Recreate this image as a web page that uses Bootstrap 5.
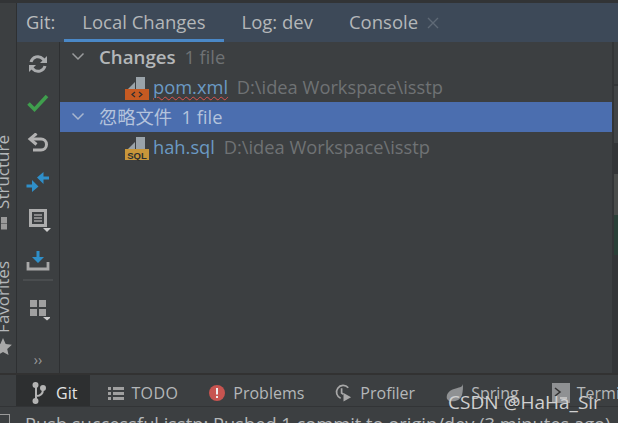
<!DOCTYPE html>
<html lang="en"><head><meta charset="utf-8"><title>Git</title>
<link href="https://cdn.jsdelivr.net/npm/bootstrap@5.3.0/dist/css/bootstrap.min.css" rel="stylesheet">
<style>
html,body{height:423px;overflow:hidden;background:#3c3f41}
body{font-family:"Open Sans","Noto Sans CJK SC",sans-serif;font-size:18.3px;color:#b4b7b9;position:relative;width:618px}
.ide-top{height:3px;background:#323436;flex:none}
.ide-mid{height:372px;flex:none;border-bottom:2px solid #323232}
.strip{width:17px;flex:none;border-right:1px solid #2e3032;position:relative;overflow:hidden}
.vlabel{position:absolute;left:-6px;writing-mode:vertical-rl;transform:rotate(180deg);white-space:nowrap;font-size:17px;line-height:18px;color:#b4b7b9}
.ide-tabs{height:39px;background:#3d4958;flex:none;padding-left:9px;line-height:38px}
.tab-x{padding:0 18px;height:39px;font-size:18.5px}
.tab-on{border-bottom:3px solid #4a88c7}
.tools{width:43px;flex:none;border-right:1px solid #2e3032;padding-top:6px}
.tool{height:39.3px}
.tool-sep{width:30px;height:2px;background:#4a4d4f;margin:-3px 0 12px}
.tree{flex:1;min-width:0}
.rail{width:6px;flex:none;border-left:2px solid #333537;background:#333537}
.rs1{height:42px;background:#3c3f41}
.rs2{height:2px}
.rs3{height:57px;background:#414446}
.rs4{height:31px}
.rs5{height:41px;background:#4a4c4b}
.rs6{height:40px;background:#2a4038}
.t-row{height:30px;line-height:29px;white-space:nowrap}
.t-sel{background:#4b6eaf;color:#b4c3dc}
.t-head{padding-left:39px;position:relative}
.t-file{padding-left:93px;position:relative}
.chev{position:absolute;left:11px;top:10px}
.fico{position:absolute;left:65px;top:5px}
.fname{color:#6b9ac4}
.pom{text-decoration:underline wavy #d9534f 1px;text-underline-offset:2px}
.gray{color:#6f7274}
.changes-h{font-size:18.7px}
.ide-bar{height:32px;flex:none;font-size:16px;line-height:24px;border-bottom:1px solid #323436;padding-left:16px;overflow:hidden}
.b-item{display:flex;align-items:center;gap:7px;padding:5px 15px 0;height:31px;white-space:nowrap}
.b-on{background:#2d2f30;color:#e4e4e4;padding:5px 13px 0 16px;gap:10px}
.b-gap{margin-left:3px}
.todo-t{letter-spacing:.4px}
.ide-status{font-size:18.3px;line-height:20px;white-space:nowrap;padding:7px 0 0 25px;color:#b4b7b9;position:relative}
.chk{position:absolute;left:-1px;top:7px;width:11px;height:14px;border:1px solid #9a9a9a}
.wmark{position:absolute;left:448px;top:389px;font-size:19px;line-height:26px;color:#d0d0d0;white-space:nowrap}
.more{font-size:14px;line-height:16px;margin-bottom:5px;color:#9a9a9a}
</style></head><body>
<div class="d-flex flex-column" style="height:423px">
<div class="ide-top"></div>
<div class="ide-mid d-flex">
<div class="strip">
<div class="vlabel" style="top:132px">Structure</div>
<svg class="position-absolute" style="left:0;top:214px" width="9" height="14"><rect x="1" y="0" width="6" height="6" fill="#9a9a9a"/><rect x="1" y="6.500" width="6" height="6" fill="#9a9a9a"/></svg>
<div class="vlabel" style="top:258px">Favorites</div>
<svg class="position-absolute" style="left:-7px;top:334px" width="20" height="20" viewBox="0 0 18 18"><path d="M9 1l2.400 5.300 5.600.6-4.200 3.800 1.200 5.600L9 13.500l-5 2.800 1.200-5.600L1 6.900l5.600-.6z" fill="#a8a8a8"/></svg>
</div>
<div class="flex-grow-1 d-flex flex-column" style="min-width:0">
<div class="ide-tabs d-flex">
<span style="margin-right:9px;color:#b9bcbe">Git:</span>
<span class="tab-x tab-on">Local Changes</span>
<span class="tab-x">Log: dev</span>
<span class="tab-x pe-2">Console</span>
<svg style="margin-top:13px" width="14" height="14"><path d="M2 2l10 10M12 2L2 12" stroke="#5f6a76" stroke-width="1.400"/></svg>
</div>
<div class="d-flex flex-grow-1">
<div class="tools d-flex flex-column align-items-center">
<div class="tool"><svg width="20" height="20" viewBox="0 0 20 20" fill="none" stroke="#a9abad" stroke-width="3"><path d="M3 8a7 7 0 0 1 12-3l1.500 1.500M17 12a7 7 0 0 1-12 3l-1.500-1.500"/><path d="M19 2V9h-7z" fill="#a9abad" stroke="none"/><path d="M1 18V11h7z" fill="#a9abad" stroke="none"/></svg></div>
<div class="tool"><svg width="22" height="20" viewBox="0 0 22 20" fill="none"><path d="M1.500 10.500l6 6L20 3" stroke="#3f9e4d" stroke-width="3.600"/></svg></div>
<div class="tool"><svg width="22" height="20" viewBox="0 0 22 20" fill="none" stroke="#b2b2b2" stroke-width="3"><path d="M4 6h10a5.500 5.500 0 0 1 0 11H6"/><path d="M9.500 0.500L3 6l6.500 5.500"/></svg></div>
<div class="tool"><svg width="24" height="22" viewBox="0 0 24 22" fill="#2f8fc9"><path d="M11 6.500L17.500 1v4.500H23v3h-5.500V13z"/><path d="M12.500 15.500L6 21v-4.500H.5v-3H6V9z"/></svg></div>
<div class="tool"><svg width="28" height="24" viewBox="0 0 28 24" fill="none"><rect x="6.500" y="1.500" width="15" height="15" stroke="#adadad" stroke-width="3"/><path d="M10 6h8M10 9h8M10 12h8" stroke="#a0a0a0" stroke-width="1.300"/><path d="M19 19h8l-4 4z" fill="#ccc"/></svg></div>
<div class="tool" style="height:38px"><svg width="24" height="22" viewBox="0 0 24 22"><path d="M2 12v7h20V12" fill="none" stroke="#a8a8a8" stroke-width="2.800"/><path d="M10.500 1h3v6H18l-6 6-6-6h4.500z" fill="#2f8fc9"/></svg></div>
<div class="tool-sep"></div>
<div class="tool"><svg width="24" height="24" viewBox="0 0 24 24" fill="#a0a0a0"><rect x="4" y="2" width="7" height="7"/><rect x="13" y="2" width="7" height="7"/><rect x="4" y="11" width="7" height="7"/><rect x="13" y="11" width="7" height="7"/><path d="M17 19h8l-4 3.500z" fill="#ccc"/></svg></div>
<div class="mt-auto more">››</div>
</div>
<div class="tree">
<div class="t-row t-head"><svg class="chev" width="14" height="9"><path d="M1.500 1.500L7 7l5.500-5.500" fill="none" stroke="#9a9c9e" stroke-width="1.500"/></svg><b class="fw-semibold changes-h">Changes</b> <span class="gray ms-1">1 file</span></div>
<div class="t-row t-file"><svg class="fico" width="24" height="24" viewBox="0 0 24 24"><path d="M11 0h9v12H11z" fill="#9aa3a9"/><path d="M3 12l7-7v7z" fill="#9aa3a9"/><rect x="0" y="12" width="24" height="11" fill="#c55a22"/><path d="M10 15L7 17.500l3 2.500M14 15l3 2.500-3 2.500" fill="none" stroke="#2d2f30" stroke-width="1.200"/></svg><span class="fname pom">pom.xml</span> <span class="gray ms-1">D:\idea Workspace\isstp</span></div>
<div class="t-row t-head t-sel"><svg class="chev" width="14" height="9"><path d="M1.500 1.500L7 7l5.500-5.500" fill="none" stroke="#a8b6ce" stroke-width="1.500"/></svg>忽略文件&nbsp; 1 file</div>
<div class="t-row t-file"><svg class="fico" width="24" height="24" viewBox="0 0 24 24"><path d="M11 0h9v12H11z" fill="#9aa3a9"/><path d="M3 12l7-7v7z" fill="#9aa3a9"/><rect x="0" y="12" width="24" height="11" fill="#c8963a"/><text x="12" y="21.500" font-size="9.500" font-weight="700" text-anchor="middle" fill="#2d2f30" font-family="Liberation Sans">SQL</text></svg><span class="fname">hah.sql</span> <span class="gray ms-1">D:\idea Workspace\isstp</span></div>
</div>
<div class="rail"><div class="rs1"></div><div class="rs2"></div><div class="rs3"></div><div class="rs4"></div><div class="rs5"></div><div class="rs6"></div></div>
</div>
</div>
</div>
<div class="ide-bar d-flex">
<div class="b-item b-on"><svg width="14" height="22" viewBox="0 0 14 22" fill="none" stroke="#b4b4b4" stroke-width="2"><path d="M4 3v15M4 14c5 0 7-3 7-7"/><circle cx="3.500" cy="3" r="2" fill="#b4b4b4"/><circle cx="11" cy="6" r="2" fill="#b4b4b4"/><circle cx="3.500" cy="19" r="2" fill="#b4b4b4"/></svg><span>Git</span></div>
<div class="b-item b-gap"><svg width="16" height="14" fill="#a0a0a0"><path d="M0 1h3v3H0zM5 1h11v3H5zM0 6h3v3H0zM5 6h11v3H5zM0 11h3v3H0zM5 11h11v3H5z"/></svg><span class="todo-t">TODO</span></div>
<div class="b-item"><svg width="18" height="18"><circle cx="9" cy="9" r="8" fill="#c75450"/><path d="M8 4h2v6.500H8zM8 12h2v2H8z" fill="#eee"/></svg><span>Problems</span></div>
<div class="b-item"><svg width="19" height="20" viewBox="0 0 20 20" fill="none" stroke="#a8a8a8" stroke-width="1.800"><path d="M15 4.500A7 7 0 1 0 7 15.500"/><path d="M8 5v5l2 1.500"/><path d="M10 10l8 4.500-8 4.500z" fill="#a8a8a8" stroke="none"/></svg><span>Profiler</span></div>
<div class="b-item"><svg width="19" height="18" viewBox="0 0 19 18"><path d="M18 0c-1 4-4 3-9 5C3 7 1 11 2 15l2 2c5 1 11 0 13-6 1-4 1-8 1-11z" fill="#8f9193"/></svg><span>Spring</span></div>
<div class="b-item b-gap pe-0"><svg width="18" height="20"><rect width="18" height="20" fill="#8f9193"/><path d="M3 5l5 4-5 4" fill="none" stroke="#333" stroke-width="1.600"/><path d="M8 15h7" stroke="#ccc" stroke-width="1.600"/></svg><span>Terminal</span></div>
</div>
<div class="ide-status"><span class="chk"></span>Push successful isstp: Pushed 1 commit to origin/dev (3 minutes ago)</div>
</div>
<div class="wmark">CSDN @HaHa_Sir</div>
</body></html>
